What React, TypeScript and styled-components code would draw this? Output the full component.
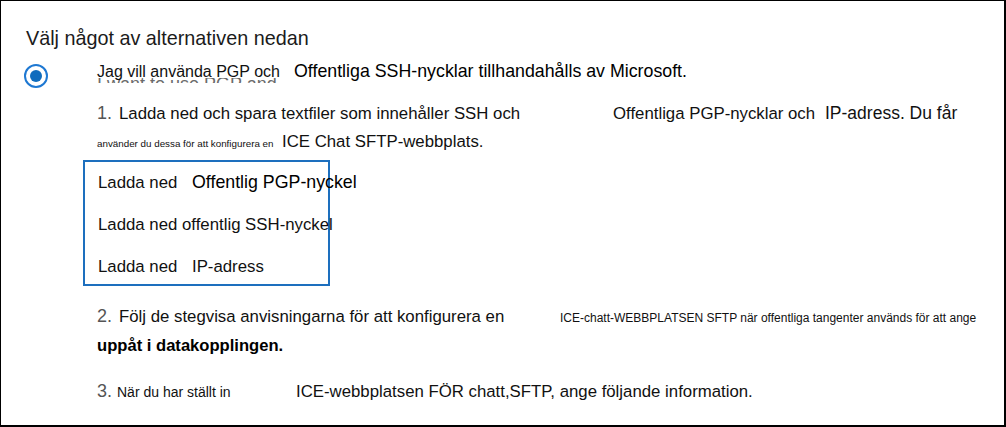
import React from "react";
import styled, { createGlobalStyle } from "styled-components";

const Global = createGlobalStyle`
  html, body { margin: 0; padding: 0; background: #fff; }
  body { font-family: "Liberation Sans", Arial, sans-serif; color: #111; }
`;

const Frame = styled.section`
  box-sizing: border-box;
  width: 1006px;
  height: 427px;
  border: 1px solid #000;
  border-right-width: 2px;
  border-bottom-width: 2px;
  padding: 25px 0 0 23px;
  background: #fff;
  overflow: hidden;
`;

const Heading = styled.h2`
  margin: 0 0 10px 2px;
  font-size: 19.8px;
  line-height: 24px;
  font-weight: normal;
  color: #1b1b1b;
`;

const OptionRow = styled.div`
  display: flex;
  gap: 49px;
`;

const Radio = styled.span`
  box-sizing: border-box;
  flex: none;
  width: 24px;
  height: 24px;
  margin-top: 4px;
  border-radius: 50%;
  border: 2px solid #1e78d2;
  display: flex;
  align-items: center;
  justify-content: center;
  &::after {
    content: "";
    width: 12px;
    height: 12px;
    border-radius: 50%;
    background: #0f6cbd;
  }
`;

const Column = styled.div`
  display: flex;
  flex-direction: column;
`;

const TitleLine = styled.div`
  position: relative;
  font-size: 16px;
  line-height: 22px;
  white-space: nowrap;
  color: #000;
`;

const Ghost = styled.div`
  position: absolute;
  left: 0;
  top: 18px;
  width: 192px;
  height: 5px;
  overflow: hidden;
  & > span {
    display: block;
    margin-top: -3px;
    font-size: 18px;
    line-height: 18px;
    color: #6b6b6b;
  }
`;

const Step = styled.div<{ $gap: number }>`
  margin-top: ${(p) => p.$gap}px;
`;

const Line = styled.div`
  position: relative;
  font-size: 16.8px;
  line-height: 28px;
  white-space: nowrap;
  color: #111;
`;

const Seg = styled.span<{ $w?: number; $size?: number; $bold?: boolean; $dark?: boolean }>`
  position: relative;
  display: inline-block;
  ${(p) => (p.$w ? `width: ${p.$w}px;` : "")}
  font-size: ${(p) => p.$size ?? 16.8}px;
  font-weight: ${(p) => (p.$bold ? 600 : "normal")};
  color: ${(p) => (p.$dark ? "#000" : "#111")};
  white-space: nowrap;
  vertical-align: baseline;
`;

const Num = styled.span<{ $w: number }>`
  display: inline-block;
  width: ${(p) => p.$w}px;
  font-size: 18px;
  color: #555;
`;

const DownloadBox = styled.div`
  box-sizing: border-box;
  margin: 2px 0 0 -14px;
  width: 247px;
  height: 126px;
  border: 2px solid #1d6fbe;
  padding: 2px 0 0 13px;
  display: flex;
  flex-direction: column;
  gap: 6px;
`;

const DownloadRow = styled.div`
  font-size: 16.8px;
  line-height: 36px;
  white-space: nowrap;
  color: #111;
`;

export default function App() {
  return (
    <>
      <Global />
      <Frame>
        <Heading>Välj något av alternativen nedan</Heading>
        <OptionRow>
          <Radio />
          <Column>
            <TitleLine>
              <Ghost>
                <span>I want to use PGP and</span>
              </Ghost>
              <Seg $w={197} $size={16}>
                Jag vill använda PGP och
              </Seg>
              <Seg $size={17.8} $dark>
                Offentliga SSH-nycklar tillhandahålls av Microsoft.
              </Seg>
            </TitleLine>

            <Step $gap={16}>
              <Line>
                <Num $w={22}>1.</Num>
                <Seg $w={494}>Ladda ned och spara textfiler som innehåller SSH och</Seg>
                <Seg $w={212}>Offentliga PGP-nycklar och</Seg>
                <Seg $size={17.5}>IP-adress. Du får</Seg>
              </Line>
              <Line>
                <Seg $w={185} $size={9.8}>använder du dessa för att konfigurera en</Seg>
                <Seg>ICE Chat SFTP-webbplats.</Seg>
              </Line>
            </Step>

            <DownloadBox>
              <DownloadRow>
                <Seg $w={94} $size={16.8}>Ladda ned</Seg>
                <Seg $size={17.8} $dark>Offentlig PGP-nyckel</Seg>
              </DownloadRow>
              <DownloadRow>Ladda ned offentlig SSH-nyckel</DownloadRow>
              <DownloadRow>
                <Seg $w={94} $size={16.8}>Ladda ned</Seg>
                <Seg $size={16.8}>IP-adress</Seg>
              </DownloadRow>
            </DownloadBox>

            <Step $gap={16}>
              <Line>
                <Num $w={22}>2.</Num>
                <Seg $w={441}>Följ de stegvisa anvisningarna för att konfigurera en</Seg>
                <Seg $size={12}>ICE-chatt-WEBBPLATSEN SFTP när offentliga tangenter används för att ange</Seg>
              </Line>
              <Line>
                <Seg $bold $dark $size={16.6}>uppåt i datakopplingen.</Seg>
              </Line>
            </Step>

            <Step $gap={17}>
              <Line>
                <Num $w={20}>3.</Num>
                <Seg $w={179} $size={14}>När du har ställt in</Seg>
                <Seg>ICE-webbplatsen FÖR chatt,SFTP, ange följande information.</Seg>
              </Line>
            </Step>
          </Column>
        </OptionRow>
      </Frame>
    </>
  );
}
